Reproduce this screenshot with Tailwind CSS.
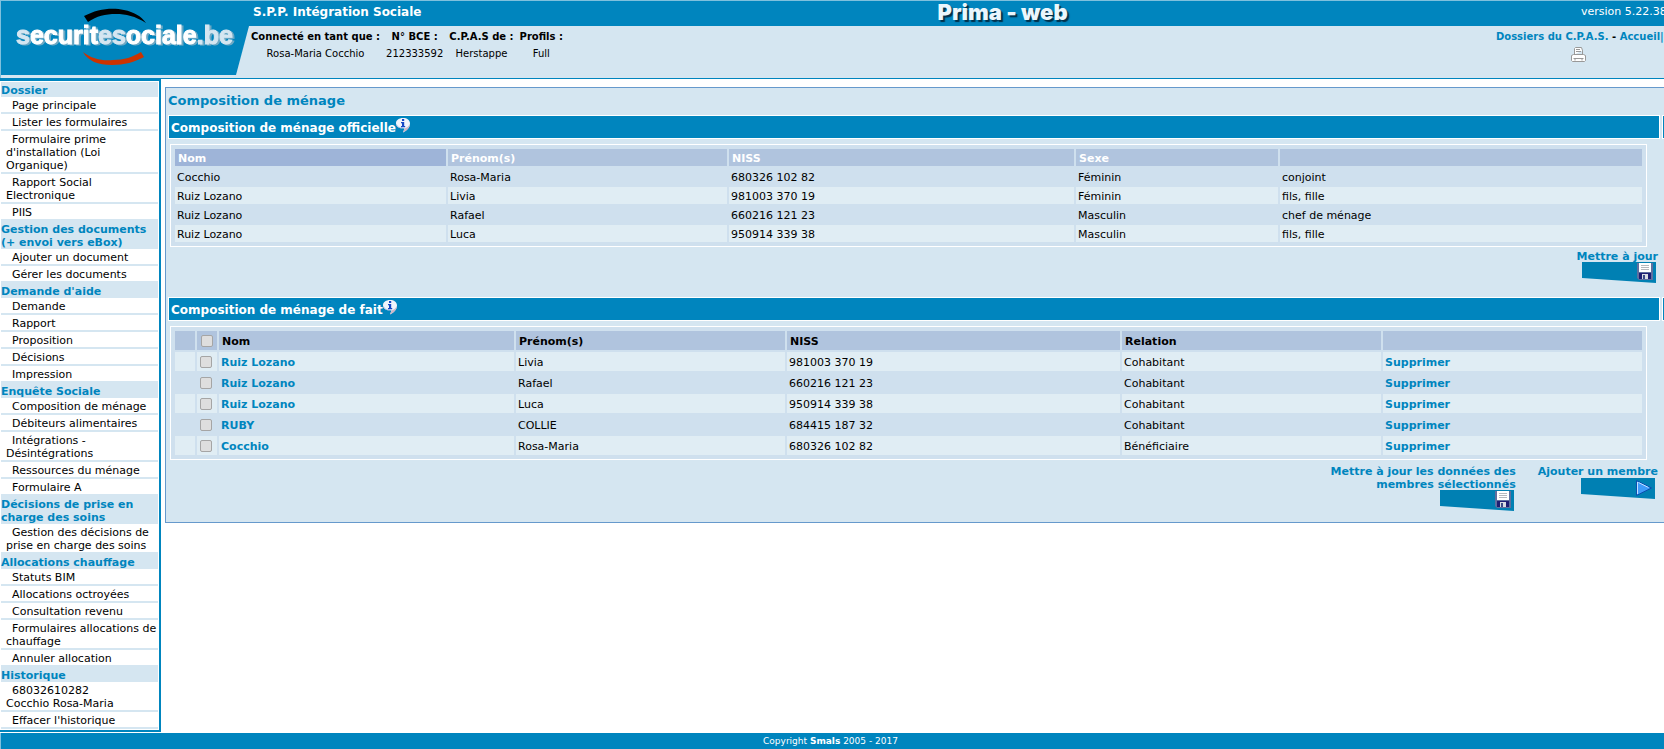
<!DOCTYPE html>
<html lang="fr">
<head>
<meta charset="utf-8">
<title>Prima - web</title>
<script src="https://cdn.jsdelivr.net/npm/@tailwindcss/browser@4"></script>
</head>
<body class="flex min-h-screen flex-col overflow-x-hidden bg-white font-['DejaVu_Sans',sans-serif] text-[11px] leading-[13px] text-black">

<svg class="hidden" aria-hidden="true">
  <defs>
    <symbol id="info" viewBox="0 0 14 15">
      <path d="M7 0C3 0 0 2.200 0 5.200s2.800 5 6.500 5l2 .3-1.500 4c3.500-1.500 7-5 7-9C14 2 11 0 7 0z" fill="#f1f4fc"/>
      <path d="M7 14.500c3.500-1.500 6.800-4.800 7-8.500-1.300 2.400-3 3.800-5.500 4.500z" fill="#cdb6c6"/>
      <path d="M.4 6.500C1.200 8.800 3.500 10 6.500 10" fill="none" stroke="#aab4dc" stroke-width=".8"/>
      <path d="M6 1h2.200v2H6zM5 4h3.200v4h1v1.200H5V8h1V5.200H5z" fill="#1647c4"/>
    </symbol>
    <symbol id="btn-save" viewBox="0 0 74 21">
      <path d="M0 0h74v21L0 16z" fill="#0080b3"/>
      <path d="M55 1h16v17H57l-2-2z" fill="#5f6f9f"/>
      <path d="M57 1h12v9H57z" fill="#fff"/>
      <path d="M59 3h8v1h-8zM59 5h8v1h-8zM59 7h8v1h-8z" fill="#b5b8bd"/>
      <path d="M57 11h12v6H57z" fill="#1e1e72"/>
      <path d="M60 12h6v5h-6z" fill="#d9dbe2"/>
      <path d="M61 13h2v4h-2z" fill="#3a4a86"/>
    </symbol>
    <symbol id="btn-next" viewBox="0 0 74 21">
      <path d="M0 0h74v21L0 16z" fill="#0080b3"/>
      <path d="M55.500 2.500v15L70.500 10z" fill="#3f9bfa" stroke="#0b4fae"/>
      <path d="M56.500 4v12M57.500 4.500l10 5" stroke="#c4e1ff"/>
    </symbol>
  </defs>
</svg>

<header class="flex border-t border-b border-t-[#7fc0dd] border-b-[#0085be] bg-[#d5e6f1]">
  <a href="#" aria-label="securitesociale.be" class="block shrink-0">
    <svg width="249" height="77" viewBox="0 0 249 77">
      <path d="M0 0h249v25L236 74H0z" fill="#0085be"/>
      <path d="M0 0h1v77H0z" fill="#7fc0dd"/>
      <path d="M84 15C97 8 112 6 124 9c10 2 17 6 22 13-11-7-20-9-30-9-11 0-19 2-28 8z" fill="#000"/>
      <path d="M83 51c9 7 19 9 30 8 11 0 20-3 28-8l3 5c-9 5-20 8-32 8-14 0-24-4-29-13z" fill="#cc3300"/>
      <text x="16" y="43" class="fill-white stroke-white stroke-1 font-['Liberation_Sans',sans-serif] text-[25px] font-bold drop-shadow-[2px_1px_0px_#6fa9c4]"><tspan fill="#d5e6f1" stroke="#d5e6f1">s</tspan>ecurit<tspan fill="#d5e6f1" stroke="#d5e6f1">es</tspan>ociale<tspan fill="#d5e6f1" stroke="#d5e6f1">.be</tspan></text>
    </svg>
  </a>
  <div class="min-w-0 flex-1">
    <div class="flex h-[25px] items-center bg-[#0085be] pl-1 text-white">
      <span class="flex-4 pb-1 text-xs font-bold">S.P.P. Intégration Sociale</span>
      <h1 class="pb-1 font-['Inter',sans-serif] text-[22px] leading-5 font-black text-[#eaf6fc] [text-shadow:2px_2px_1px_#00304a]">Prima - web</h1>
      <span class="flex-3"></span>
      <span class="w-[83px] shrink-0 overflow-hidden pb-1 whitespace-nowrap">version 5.22.38</span>
    </div>
    <div class="flex justify-between text-[10px]">
      <table class="mt-[3px] -ml-1 border-separate border-spacing-x-[6px] border-spacing-y-0 text-center">
        <thead><tr class="h-[14px] whitespace-nowrap"><th class="font-bold">Connecté en tant que :</th><th class="font-bold">N° BCE :</th><th class="font-bold">C.P.A.S de :</th><th class="font-bold">Profils :</th></tr></thead>
        <tbody><tr class="h-5 whitespace-nowrap"><td>Rosa-Maria Cocchio</td><td>212333592</td><td>Herstappe</td><td>Full</td></tr></tbody>
      </table>
      <div class="w-[168px] shrink-0 overflow-hidden pt-1 whitespace-nowrap">
        <nav class="font-bold text-[#0085be]"><a href="#">Dossiers du C.P.A.S.</a> <span class="text-black">-</span> <a href="#">Accueil</a>|</nav>
        <button type="button" aria-label="Imprimer" class="mt-1 ml-[75px] block">
          <svg width="15" height="15" viewBox="0 0 15 15" fill="#fff" stroke="#999"><path d="M3.500 7.500v-6l1-1h6l1 3v4M.5 13.500v-5l2-1h10l2 1v5l-1 1h-12zM3.500 7.500h8v-4M2.500 11.500h10M5 2.500h4M5 4.500h5M4 11.500v2M11 11.500v2"/></svg>
        </button>
      </div>
    </div>
  </div>
</header>

<div class="flex flex-1">
  <nav class="mb-px w-[161px] shrink-0 border-y-2 border-r-2 border-[#0085be] px-px py-px [&_h2]:bg-[#d5e6f1] [&_h2]:pt-[2px] [&_h2]:font-bold [&_h2]:text-[#0085be] [&_a]:block [&_a]:border-b-2 [&_a]:border-[#d5e6f1] [&_a]:pt-[2px] [&_a]:pl-[5px] [&_a]:indent-[6px]">
    <h2>Dossier</h2>
    <a href="#">Page principale</a>
    <a href="#">Lister les formulaires</a>
    <a href="#">Formulaire prime d'installation (Loi Organique)</a>
    <a href="#">Rapport Social Electronique</a>
    <a href="#">PIIS</a>
    <h2>Gestion des documents<br>(+ envoi vers eBox)</h2>
    <a href="#">Ajouter un document</a>
    <a href="#">Gérer les documents</a>
    <h2>Demande d'aide</h2>
    <a href="#">Demande</a>
    <a href="#">Rapport</a>
    <a href="#">Proposition</a>
    <a href="#">Décisions</a>
    <a href="#">Impression</a>
    <h2>Enquête Sociale</h2>
    <a href="#">Composition de ménage</a>
    <a href="#">Débiteurs alimentaires</a>
    <a href="#">Intégrations - Désintégrations</a>
    <a href="#">Ressources du ménage</a>
    <a href="#">Formulaire A</a>
    <h2>Décisions de prise en charge des soins</h2>
    <a href="#">Gestion des décisions de prise en charge des soins</a>
    <h2>Allocations chauffage</h2>
    <a href="#">Statuts BIM</a>
    <a href="#">Allocations octroyées</a>
    <a href="#">Consultation revenu</a>
    <a href="#">Formulaires allocations de chauffage</a>
    <a href="#">Annuler allocation</a>
    <h2>Historique</h2>
    <a href="#">68032610282<br>Cocchio Rosa-Maria</a>
    <a href="#">Effacer l'historique</a>
  </nav>

  <main class="mt-2 ml-1 min-w-0 flex-1 self-start border-y border-l border-[#6699cc] bg-[#d5e6f1] pb-[11px] pl-[2px]">
    <h2 class="pt-[5px] pb-[6px] text-[13px] leading-4 font-bold text-[#0085be]">Composition de ménage</h2>

    <section>
      <div class="flex h-6 gap-[2px]">
        <h3 class="flex flex-1 items-center border border-white bg-[#0085be] pt-[2px] pl-[2px] text-xs font-bold text-white">Composition de ménage officielle<button type="button" aria-label="Aide" class="self-start"><svg width="14" height="15"><use href="#info"/></svg></button></h3>
        <div class="w-[2px] border-y border-l border-white bg-[#0085be]"></div>
      </div>
      <div class="mt-[5px] mr-[17px] ml-[2px] border border-white bg-[#cfe0ee] p-[2px]">
        <table class="w-full table-fixed border-separate border-spacing-[2px] text-left [&_td]:h-[17px] [&_td]:px-[2px] [&_td]:pt-[2px] [&_td]:pb-0 [&_th]:h-[17px] [&_th]:px-[3px] [&_th]:pt-[2px] [&_th]:pb-0">
          <colgroup><col class="w-[271px]"><col class="w-[279px]"><col class="w-[345px]"><col class="w-[202px]"><col></colgroup>
          <thead><tr class="bg-[#b0c4de] text-white"><th class="bg-[#9eb4d8]">Nom</th><th>Prénom(s)</th><th>NISS</th><th>Sexe</th><th></th></tr></thead>
          <tbody>
            <tr><td>Cocchio</td><td>Rosa-Maria</td><td>680326 102 82</td><td>Féminin</td><td>conjoint</td></tr>
            <tr class="bg-[#e0edf4]"><td>Ruiz Lozano</td><td>Livia</td><td>981003 370 19</td><td>Féminin</td><td>fils, fille</td></tr>
            <tr><td>Ruiz Lozano</td><td>Rafael</td><td>660216 121 23</td><td>Masculin</td><td>chef de ménage</td></tr>
            <tr class="bg-[#e0edf4]"><td>Ruiz Lozano</td><td>Luca</td><td>950914 339 38</td><td>Masculin</td><td>fils, fille</td></tr>
          </tbody>
        </table>
      </div>
      <div class="flex justify-end pt-[3px] pr-[6px] pb-[14px] text-right font-bold text-[#0085be]">
        <button type="button" class="flex flex-col items-end"><span>Mettre à jour</span><svg class="-mt-px mr-[2px]" width="74" height="21"><use href="#btn-save"/></svg></button>
      </div>
    </section>

    <section>
      <div class="flex h-6 gap-[2px]">
        <h3 class="flex flex-1 items-center border border-white bg-[#0085be] pt-[2px] pl-[2px] text-xs font-bold text-white">Composition de ménage de fait<button type="button" aria-label="Aide" class="self-start"><svg width="14" height="15"><use href="#info"/></svg></button></h3>
        <div class="w-[2px] border-y border-l border-white bg-[#0085be]"></div>
      </div>
      <div class="mt-[5px] mr-[17px] ml-[2px] border border-white bg-[#cfe0ee] p-[2px]">
        <table class="w-full table-fixed border-separate border-spacing-[2px] text-left [&_a]:font-bold [&_a]:text-[#0085be] [&_input]:mb-[2px] [&_input]:ml-px [&_input]:block [&_input]:size-3 [&_input]:appearance-none [&_input]:rounded-[2px] [&_input]:border [&_input]:border-[#a5a5a5] [&_input]:bg-[#dedede] [&_td]:h-[19px] [&_td]:px-[2px] [&_td]:pt-[2px] [&_td]:pb-0 [&_th]:h-[19px] [&_th]:px-[3px] [&_th]:pt-[2px] [&_th]:pb-0">
          <colgroup><col class="w-5"><col class="w-5"><col class="w-[295px]"><col class="w-[269px]"><col class="w-[333px]"><col class="w-[259px]"><col></colgroup>
          <thead><tr class="bg-[#b0c4de]"><th></th><th><input type="checkbox" aria-label="Tout sélectionner"></th><th>Nom</th><th>Prénom(s)</th><th>NISS</th><th>Relation</th><th></th></tr></thead>
          <tbody>
            <tr class="bg-[#e0edf4]"><td></td><td><input type="checkbox" aria-label="Livia Ruiz Lozano"></td><td><a href="#">Ruiz Lozano</a></td><td>Livia</td><td>981003 370 19</td><td>Cohabitant</td><td><a href="#">Supprimer</a></td></tr>
            <tr><td></td><td><input type="checkbox" aria-label="Rafael Ruiz Lozano"></td><td><a href="#">Ruiz Lozano</a></td><td>Rafael</td><td>660216 121 23</td><td>Cohabitant</td><td><a href="#">Supprimer</a></td></tr>
            <tr class="bg-[#e0edf4]"><td></td><td><input type="checkbox" aria-label="Luca Ruiz Lozano"></td><td><a href="#">Ruiz Lozano</a></td><td>Luca</td><td>950914 339 38</td><td>Cohabitant</td><td><a href="#">Supprimer</a></td></tr>
            <tr><td></td><td><input type="checkbox" aria-label="COLLIE RUBY"></td><td><a href="#">RUBY</a></td><td>COLLIE</td><td>684415 187 32</td><td>Cohabitant</td><td><a href="#">Supprimer</a></td></tr>
            <tr class="bg-[#e0edf4]"><td></td><td><input type="checkbox" aria-label="Rosa-Maria Cocchio"></td><td><a href="#">Cocchio</a></td><td>Rosa-Maria</td><td>680326 102 82</td><td>Bénéficiaire</td><td><a href="#">Supprimer</a></td></tr>
          </tbody>
        </table>
      </div>
      <div class="flex items-start justify-end gap-[22px] pt-[5px] pr-[6px] text-right font-bold text-[#0085be]">
        <button type="button" class="flex flex-col items-end text-right"><span>Mettre à jour les données des<br>membres sélectionnés</span><svg class="-mt-px mr-[2px]" width="74" height="21"><use href="#btn-save"/></svg></button>
        <button type="button" class="flex flex-col items-end"><span>Ajouter un membre</span><svg class="mr-[3px]" width="74" height="21"><use href="#btn-next"/></svg></button>
      </div>
    </section>
  </main>
</div>

<footer class="h-4 border-l border-[#7fc0dd] bg-[#0085be] pr-1 text-center text-[9px] leading-4 text-white">Copyright <b>Smals</b> 2005 - 2017</footer>
</body>
</html>
